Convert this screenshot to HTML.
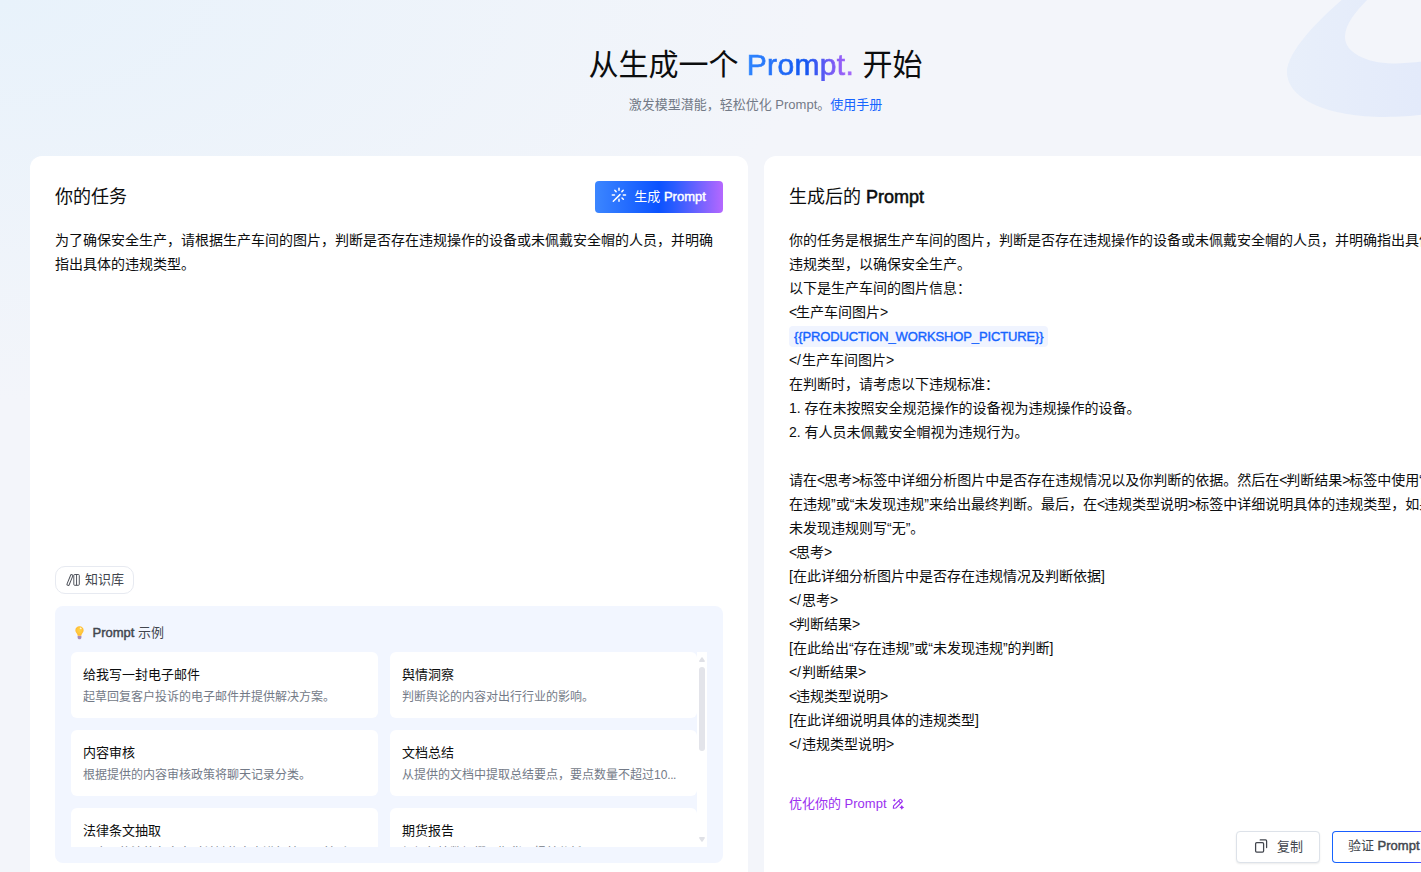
<!DOCTYPE html>
<html lang="zh-CN">
<head>
<meta charset="utf-8">
<title>Prompt</title>
<style>
*{box-sizing:border-box;margin:0;padding:0}
html,body{width:1421px;height:872px;overflow:hidden}
body{font-family:"Liberation Sans","Noto Sans CJK SC",sans-serif;color:#0c0d0e;background:#f2f4fa;position:relative;font-size:14px;line-height:24px}
.bg{position:absolute;left:0;top:0;width:1421px;height:872px;background:radial-gradient(ellipse 820px 400px at 0 0,#e8f2fb 0,rgba(243,245,250,0) 100%),#f3f5fa}
.bg svg{position:absolute;left:0;top:0}
.hero{position:absolute;left:0;top:0;width:1511px;text-align:center}
.hero h1{position:absolute;left:0;width:100%;top:43px;font-size:30px;line-height:44px;font-weight:400;color:#0c0d0e;white-space:nowrap}
.hero h1 .g{font-weight:400;-webkit-text-stroke:0.7px transparent;letter-spacing:0.35px;background:linear-gradient(90deg,#2f86ff 0%,#1456f0 55%,#8d5cf6 85%,#a86bfa 100%);-webkit-background-clip:text;background-clip:text;color:transparent}
.hero p{position:absolute;left:0;width:100%;top:93.500px;font-size:13px;line-height:22px;color:#737a87}
.hero p a{color:#1664ff;text-decoration:none}
.panel{position:absolute;background:#fff;border-radius:12px}
.left{left:30px;top:156px;width:718px;height:740px}
.right{left:764px;top:156px;width:718px;height:740px}
.title{position:absolute;left:25px;top:27px;font-size:18px;line-height:28px;font-weight:400;color:#0c0d0e;white-space:nowrap}
.title b{font-weight:400;-webkit-text-stroke:0.55px}
.gen{position:absolute;left:565px;top:25px;width:128px;height:32px;border-radius:4px;background:linear-gradient(90deg,#3c86ff 0%,#0b52ff 50%,#2a5cff 62%,#b568ff 100%);color:#fff;font-size:13px;line-height:32px;white-space:nowrap}
.gen span{position:absolute;left:39.300px;top:0}
.gen b{font-weight:400;-webkit-text-stroke:0.45px}
.task{position:absolute;left:25px;top:72px;width:668px;font-size:14px;line-height:24px;color:#0c0d0e}

.kb{position:absolute;left:25px;top:410px;width:79px;height:28px;border:1px solid #e7eaf1;border-radius:10px;background:#fff;font-size:13px;line-height:25px;color:#42464e;white-space:nowrap}
.kb svg{position:absolute;left:10px;top:6px}
.kb span{position:absolute;left:29px;top:0}
.ex{position:absolute;left:25px;top:450px;width:668px;height:257px;border-radius:8px;background:#f2f6ff}
.ex .hd{position:absolute;left:37.500px;top:16px;font-size:13px;line-height:22px;color:#42464e;white-space:nowrap}
.ex .hd b{font-weight:400;-webkit-text-stroke:0.45px}
.ex .bulb{position:absolute;left:20px;top:19.500px}
.scroll{position:absolute;left:16px;top:46px;width:636px;height:195px;overflow:hidden}
.sb{position:absolute;right:0;top:0;width:10px;height:195px;background:#fff}
.sb i{position:absolute;left:2px;top:15px;width:6px;height:84px;border-radius:3px;background:#e3e4ea}
.sb svg{position:absolute;left:1px}
.card{position:absolute;width:307px;height:66px;border-radius:6px;background:#fff}
.card h4{position:absolute;left:12px;top:11.500px;font-size:13px;line-height:22px;font-weight:400;color:#0c0d0e;white-space:nowrap}
.card p{position:absolute;left:12px;top:34.500px;width:279px;font-size:12px;line-height:20px;color:#737a87;white-space:nowrap;overflow:hidden;text-overflow:ellipsis}
.out{position:absolute;left:25px;top:72px;font-size:14px;line-height:24px;color:#0c0d0e;white-space:nowrap}
.var{display:inline-block;height:21px;line-height:21px;margin-top:1px;padding:0 4px 0 5px;letter-spacing:-0.13px;border-radius:4px;background:#f0f4ff;color:#1664ff;font-size:13px;font-weight:400;-webkit-text-stroke:0.4px;vertical-align:top;margin-top:2px}
.out i{font-style:normal;letter-spacing:-1.100px}
.out u{text-decoration:none;margin-left:.8px;letter-spacing:1.200px}
.opt{position:absolute;left:25px;top:637px;font-size:13px;line-height:22px;color:#9b30f0;white-space:nowrap}
.opt svg{position:absolute;left:103px;top:4.500px}
.copy{position:absolute;left:472px;top:675px;width:84px;height:32px;border:1px solid #dde2e9;border-radius:4px;background:#fff;box-shadow:0 1px 2px rgba(0,0,0,.08);font-size:13px;line-height:30px;color:#42464e;white-space:nowrap}
.copy svg{position:absolute;left:17px;top:6px}
.copy span{position:absolute;left:40px;top:0}
.verify{position:absolute;left:568px;top:675px;width:125px;height:32px;border-radius:4px;background:linear-gradient(90deg,#1664ff 0%,#1f4bff 60%,#b568ff 100%);padding:1.200px}
.verify div{width:100%;height:100%;border-radius:3px;background:#fff;font-size:13px;line-height:27px;color:#42464e;padding-left:14.800px;white-space:nowrap}
.verify b{font-weight:400;-webkit-text-stroke:0.45px}
</style>
</head>
<body>
<div class="bg"><svg width="1421" height="160" viewBox="0 0 1421 160"><defs><linearGradient id="sw" x1="1287" y1="0" x2="1421" y2="0" gradientUnits="userSpaceOnUse"><stop offset="0" stop-color="#e8effa"/><stop offset="1" stop-color="#e3eafa"/></linearGradient><filter id="bl" x="-10%" y="-10%" width="120%" height="120%"><feGaussianBlur stdDeviation="0.7"/></filter></defs><path filter="url(#bl)" fill="url(#sw)" d="M1344 -2C1318 20 1287 52 1287 72C1287 100 1330 117 1385 117C1400 117 1412 116 1425 114.500L1425 61.500C1412 62.500 1404 63.500 1393 63.500C1365 63 1345 52 1345 37C1345 24 1356 11 1369 -2Z"/></svg></div>
<div class="hero">
<h1>从生成一个 <span class="g">Prompt.</span> 开始</h1>
<p>激发模型潜能，轻松优化 Prompt。<a>使用手册</a></p>
</div>
<div class="panel left">
<div class="title">你的任务</div>
<div class="gen"><svg style="position:absolute;left:16px;top:6px" width="16" height="16" viewBox="0 0 16 16" fill="none" stroke="#fff" stroke-width="1.500" stroke-linecap="round"><path d="M2.300 14.300 9 7.600"/><path d="M8 1.300v2M8 12.300v2M1.300 8h2.200M12.300 8h2.200M3.800 3.300l1.300 1.300M12.200 3.300l-1.300 1.300M11 11l1.300 1.300"/></svg><span>生成 <b>Prompt</b></span></div>
<div class="task">为了确保安全生产，请根据生产车间的图片，判断是否存在违规操作的设备或未佩戴安全帽的人员，并明确指出具体的违规类型。</div>

<div class="kb"><svg width="16" height="14" viewBox="0 0 16 14" fill="none" stroke="#4a4e57" stroke-width="0.95"><rect x="-1.150" y="-5.600" width="2.300" height="11.200" rx=".7" transform="translate(3.900 7) rotate(22.500)"/><rect x="7.800" y="1.500" width="5.500" height="10.800" rx=".9"/><path d="M10.550 1.500v10.800"/></svg><span>知识库</span></div>
<div class="ex">
<svg class="bulb" width="9" height="14" viewBox="0 0 9 14"><defs><radialGradient id="bg1" cx="0.5" cy="0.45" r="0.6"><stop offset="0" stop-color="#ffd24a"/><stop offset="0.6" stop-color="#ffc53a"/><stop offset="1" stop-color="#ffab1f"/></radialGradient></defs><path d="M4.500.3C2.100.3.400 2 .4 4.200c0 1.500.7 2.400 1.400 3.200.5.600.8 1.300.9 2.400h3.600c.1-1.100.400-1.800.9-2.400.7-.8 1.400-1.700 1.400-3.200C8.600 2 6.900.3 4.500.3z" fill="url(#bg1)"/><ellipse cx="5.700" cy="2.400" rx="1.100" ry=".8" transform="rotate(35 5.700 2.400)" fill="#fff6d5"/><path d="M2.600 9.900h3.800v1.600c0 1-.8 1.800-1.900 1.800s-1.900-.8-1.900-1.800z" fill="#a68bb8"/></svg>
<div class="hd"><b>Prompt</b> 示例</div>
<div class="scroll">
<div class="card" style="left:0;top:0"><h4>给我写一封电子邮件</h4><p>起草回复客户投诉的电子邮件并提供解决方案。</p></div>
<div class="card" style="left:319px;top:0"><h4>舆情洞察</h4><p>判断舆论的内容对出行行业的影响。</p></div>
<div class="card" style="left:0;top:78px"><h4>内容审核</h4><p>根据提供的内容审核政策将聊天记录分类。</p></div>
<div class="card" style="left:319px;top:78px"><h4>文档总结</h4><p>从提供的文档中提取总结要点，要点数量不超过10<span style="letter-spacing:-.5px">...</span></p></div>
<div class="card" style="left:0;top:156px"><h4>法律条文抽取</h4><p>从合同的法律条文中对关键信息点进行抽取，并形成结构化输出。</p></div>
<div class="card" style="left:319px;top:156px"><h4>期货报告</h4><p>根据行情数据撰写期货日报并分析。</p></div>
<div class="sb"><svg style="top:4px" width="8" height="7" viewBox="0 0 8 7"><path d="M4 1.900 6.200 5.200H1.800Z" fill="#dfe0e6" stroke="#dfe0e6" stroke-width="1.400" stroke-linejoin="round"/></svg><i></i><svg style="top:184px" width="8" height="7" viewBox="0 0 8 7"><path d="M4 5.100 6.200 1.800H1.800Z" fill="#dfe0e6" stroke="#dfe0e6" stroke-width="1.400" stroke-linejoin="round"/></svg></div>
</div>
</div>
</div>
<div class="panel right">
<div class="title">生成后的 <b>Prompt</b></div>

<div class="out">你的任务是根据生产车间的图片，判断是否存在违规操作的设备或未佩戴安全帽的人员，并明确指出具体的<br>违规类型，以确保安全生产。<br>以下是生产车间的图片信息：<br><i>&lt;</i>生产车间图片<i>&gt;</i><br><span class="var">{{PRODUCTION_WORKSHOP_PICTURE}}</span><br><i><i>&lt;</i></i><u>/</u>生产车间图片<i>&gt;</i><br>在判断时，请考虑以下违规标准：<br>1. 存在未按照安全规范操作的设备视为违规操作的设备。<br>2. 有人员未佩戴安全帽视为违规行为。<br><br>请在<i>&lt;</i>思考<i>&gt;</i>标签中详细分析图片中是否存在违规情况以及你判断的依据。然后在<i>&lt;</i>判断结果<i>&gt;</i>标签中使用“存<br>在违规”或“未发现违规”来给出最终判断。最后，在<i>&lt;</i>违规类型说明<i>&gt;</i>标签中详细说明具体的违规类型，如果<br>未发现违规则写“无”。<br><i>&lt;</i>思考<i>&gt;</i><br>[在此详细分析图片中是否存在违规情况及判断依据]<br><i><i>&lt;</i></i><u>/</u>思考<i>&gt;</i><br><i>&lt;</i>判断结果<i>&gt;</i><br>[在此给出“存在违规”或“未发现违规”的判断]<br><i><i>&lt;</i></i><u>/</u>判断结果<i>&gt;</i><br><i>&lt;</i>违规类型说明<i>&gt;</i><br>[在此详细说明具体的违规类型]<br><i><i>&lt;</i></i><u>/</u>违规类型说明<i>&gt;</i></div>
<div class="opt">优化你的 Prompt<svg width="14" height="14" viewBox="0 0 14 14" fill="none" stroke="#9b30f0" stroke-width="1.15" stroke-linejoin="round"><g transform="translate(5.900 5.700) rotate(-45)"><path d="M-6.400 0-4.600-1.550H4.300a.8.800 0 0 1 .8.800v1.500a.8.800 0 0 1-.8.800H-4.600Z"/><path d="M2.400-1.550v3.100"/></g><path d="M2.300.6 3 1.700 4 2.200 3 2.700 2.300 3.700 1.600 2.700.6 2.200 1.600 1.700Z" fill="#9b30f0" stroke="none"/><path d="M9.800 7 10.700 8.500 12.200 9.400 10.700 10.300 9.800 11.800 8.900 10.300 7.400 9.400 8.900 8.500Z" fill="#9b30f0" stroke="none"/></svg></div>
<div class="copy"><svg width="15" height="16" viewBox="0 0 15 16" fill="none" stroke="#42464e" stroke-width="1.25" stroke-linecap="round"><rect x="1.600" y="4.700" width="8" height="9.400" rx="1.100"/><path d="M6.200 1.900h5.400a1 1 0 0 1 1 1v6.600"/></svg><span>复制</span></div>
<div class="verify"><div>验证 <b>Prompt</b> 生成</div></div>
</div>
</body>
</html>
